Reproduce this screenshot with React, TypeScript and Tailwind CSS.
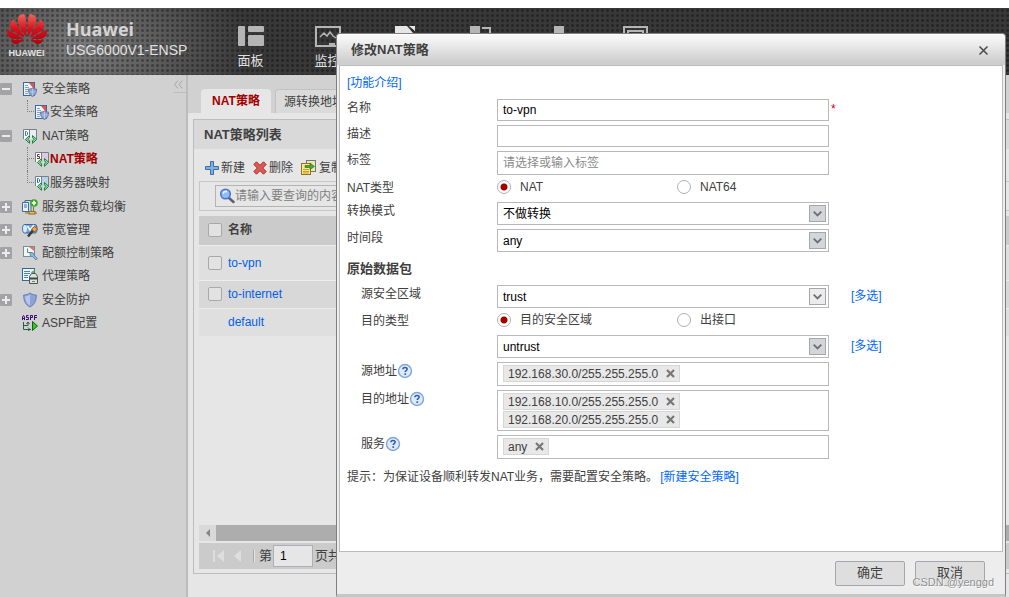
import type { ReactNode } from 'react'
import { SiHuawei } from 'react-icons/si'

/* ---------- icons ---------- */

const PolicyIcon = () => (
  <svg width="16" height="16" viewBox="0 0 16 16" className="shrink-0">
    <rect x="1.500" y="1.500" width="11" height="13" fill="#eef3f8" stroke="#3c6a94" />
    <path d="M7 2h5v6z" fill="#e0524d" />
    <path d="M3 4.500h3M3 6.500h4M3 8.500h4M3 10.500h3M3 12.500h3" stroke="#7fa5c8" />
    <path d="M6.500 8c2 0 3-.2 4-1 1 .8 2 1 4 1 0 4-1 6.200-4 7.500C7.500 14.200 6.500 12 6.500 8z" fill="#8fa3cf" stroke="#6478ae" />
    <path d="M10.500 8v6.500M8 11h5.500" stroke="#b9c7e6" />
  </svg>
)

const NatIcon = ({ letter, color, tint }: { letter: string; color: string; tint: string }) => (
  <svg width="16" height="16" viewBox="0 0 16 16" className="shrink-0">
    <path d="M1.500 11V1.500h13V11" fill={tint} stroke="#75808f" />
    <path d="M2 2h5v9H2z" fill="#fff" />
    <path d="M7.500 1.500V7" stroke="#75808f" />
    {letter === 'S' ? (
      <path d="M5.500 3.500h-2v2h2v2h-2.500" fill="none" stroke={color} />
    ) : (
      <path d="M3.500 3.500h1l1 1v2l-1 1h-1z" fill="none" stroke={color} />
    )}
    <path d="M7.500 7.500v2.200L6 11.300l1.500 1.700v2.300L3.300 11.400z" fill="#7fe0a0" stroke="#23803f" />
    <path d="M10.500 7.500v2.200l1.500 1.600-1.500 1.700v2.300l4.200-3.900z" fill="#7fe0a0" stroke="#23803f" />
  </svg>
)

const BalanceIcon = () => (
  <svg width="16" height="16" viewBox="0 0 16 16" className="shrink-0">
    <path d="M3 1.500h6v11H3z" fill="#c9dcf0" stroke="#3f6b9c" />
    <path d="M.5 3.500h6v9h-6z" fill="#eaf2fa" stroke="#3f6b9c" />
    <path d="M2 6h3M2 8h3" stroke="#3f6b9c" />
    <circle cx="12" cy="4" r="3.800" fill="#35a81c" />
    <path d="M12 1.800v4.400M9.800 4h4.400" stroke="#fff" strokeWidth="1.600" />
    <path d="M3 14h12M11.500 8v4" stroke="#84733a" />
    <rect x="7" y="12.500" width="6" height="2.500" fill="#f0c24b" stroke="#8a6d1e" />
  </svg>
)

const BandwidthIcon = () => (
  <svg width="16" height="16" viewBox="0 0 16 16" className="shrink-0">
    <path d="M2.500 2.500h11c2 0 2 8.500 0 8.500h-11c-2.500 0-2.500-8.500 0-8.500z" fill="#6fa3dc" stroke="#3c6798" />
    <ellipse cx="3" cy="6.700" rx="2" ry="3.700" fill="#d8e8f8" />
    <path d="M5.500 4l2.500 4 4-5" fill="none" stroke="#fff" strokeWidth="1.500" />
    <path d="M6 14.500l5-6" stroke="#3a3a3a" strokeWidth="2.500" />
    <path d="M9.500 7l3-2.500 3 2.500-3 3z" fill="#f2a748" stroke="#94560f" />
  </svg>
)

const QuotaIcon = () => (
  <svg width="16" height="16" viewBox="0 0 16 16" className="shrink-0">
    <rect x="1.500" y="1.500" width="11" height="10" fill="#f4f6f4" stroke="#7d8c94" />
    <path d="M7 2h5v4z" fill="#e8706c" />
    <path d="M5.500 3.500v4H10" fill="none" stroke="#4a9a5c" />
    <path d="M8 8l1.500-.5 2 .5.500 2 3.500 3.500-1.500 1.500-3.500-3.500-2-.5-.5-1.500z" fill="#8db7e2" stroke="#55809f" strokeWidth=".8" />
  </svg>
)

const ProxyIcon = () => (
  <svg width="16" height="16" viewBox="0 0 16 16" className="shrink-0">
    <rect x=".5" y=".5" width="12" height="12" fill="#eef4fa" stroke="#32689c" />
    <path d="M2 3.500h6M2 5.500h6M2 7.500h4M2 9.500h4" stroke="#4585bd" />
    <path d="M8.500 4.500L13 1.500l-1 4z" fill="#6faf50" />
    <path d="M9.500 5.500h4l2 3v7h-8v-7z" fill="#dfe2df" stroke="#4c5450" />
    <path d="M8 9.500h7v2H8z" fill="#3f4844" />
    <path d="M10 13.500h3" stroke="#49a040" />
  </svg>
)

const ShieldIcon = () => (
  <svg width="16" height="16" viewBox="0 0 16 16" className="shrink-0">
    <path d="M8 1c2 1.500 4 2 6.300 2 0 6-1.800 9.800-6.300 12C3.500 12.800 1.700 9 1.700 3 4 3 6 2.500 8 1z" fill="#8ba3d6" stroke="#6a7fae" />
    <path d="M8 2.500v11C4.800 11.500 3.200 8.800 3 4.200 5 4 6.500 3.500 8 2.500z" fill="#b4c6ea" />
  </svg>
)

const AspfIcon = () => (
  <svg width="16" height="16" viewBox="0 0 16 16" className="shrink-0">
    <path d="M.5 5V2l1-1.500L2.500 2v3M.5 3.500h2M6.500.5h-2v2h2v2h-2.500M8.500 5V.5h2v2h-2M15 .5h-2.500V5M12.500 2.500H15" fill="none" stroke="#3d0c72" />
    <path d="M1.500 7v7.500H9M1.500 10.500H6V7M4.500 9L6 7l1.500 2M6 12.500l2 2-2 1.500" fill="none" stroke="#2c5c4a" />
    <path d="M10.500 6.500l5 4.500-5 4.500z" fill="#37c42c" stroke="#14640f" />
  </svg>
)

const PlusIcon = () => (
  <svg width="14" height="14" viewBox="0 0 14 14">
    <path d="M5.500.5h3v5h5v3h-5v5h-3v-5h-5v-3h5z" fill="#7fb0de" stroke="#3a6fa5" />
  </svg>
)

const DeleteIcon = () => (
  <svg width="14" height="14" viewBox="0 0 14 14">
    <path d="M3.500.8L7 4.300 10.500.8l2.700 2.700L9.700 7l3.500 3.500-2.700 2.700L7 9.700l-3.500 3.500L.8 10.500 4.300 7 .8 3.500z" fill="#dc5a55" stroke="#a82f2c" />
  </svg>
)

const CopyIcon = () => (
  <svg width="16" height="16" viewBox="0 0 16 16">
    <rect x="5.500" y=".5" width="9" height="11" fill="#fbe88c" stroke="#6478a0" />
    <rect x=".5" y="3.500" width="9" height="11" fill="#fbe88c" stroke="#8c7420" />
    <path d="M2 9.500h6M2 11.500h6M2 13h6" stroke="#c79c28" />
    <path d="M4 5.500h5V3l4.500 3.500L9 9.500V7.500H4z" fill="#46a83a" stroke="#1f6a1a" strokeWidth=".6" />
  </svg>
)

const SearchIcon = () => (
  <svg width="16" height="16" viewBox="0 0 16 16" className="shrink-0">
    <path d="M10 10l4.500 4" stroke="#5c5f74" strokeWidth="2.500" strokeLinecap="round" />
    <circle cx="6.500" cy="6" r="4.800" fill="#8fbdf6" stroke="#4a74c8" strokeWidth="1.500" />
    <path d="M4 5.500c.5-1.500 2-2.300 4-1.800" fill="none" stroke="#fff" strokeWidth="1.500" />
  </svg>
)

const HelpIcon = () => (
  <svg width="16" height="16" viewBox="0 0 16 16" className="shrink-0">
    <circle cx="8" cy="8" r="6.500" fill="#dfeaf8" stroke="#7ea6da" strokeWidth="1.400" />
    <path d="M5.900 6.300c0-2.600 4.300-2.400 4.300-.3 0 1.500-2 1.600-2 3" fill="none" stroke="#2a5cab" strokeWidth="1.500" />
    <rect x="7.400" y="10.300" width="1.700" height="1.600" fill="#2a5cab" />
  </svg>
)

/* ---------- header ---------- */

const navItems: { label: string; text?: boolean; icon: ReactNode }[] = [
  {
    label: '面板',
    text: true,
    icon: (
      <>
        <rect x="0" y="0" width="7" height="20" rx="1" />
        <rect x="10" y="0" width="16" height="6" rx="1" />
        <rect x="10" y="9" width="16" height="11" rx="1" />
      </>
    ),
  },
  {
    label: '监控',
    text: true,
    icon: (
      <>
        <path d="M1 1h24v19H1z" fill="none" stroke="#b5b5b5" strokeWidth="2" />
        <path d="M5 11l4-4 3 3 3-4 3 4 3 2" fill="none" stroke="#b5b5b5" strokeWidth="1.500" />
        <rect x="14" y="17" width="6" height="3" />
      </>
    ),
  },
  { label: '策略', icon: <path d="M3 0h12l6 7v13H3zM17 0h6v5z" fill="#e6e6e6" /> },
  {
    label: '对象',
    icon: (
      <>
        <rect x="1" y="0" width="10" height="9" />
        <path d="M13 2h8v8" fill="none" stroke="#b5b5b5" strokeWidth="2" />
      </>
    ),
  },
  { label: '网络', icon: <rect x="8" y="0" width="10" height="20" /> },
  { label: '系统', icon: <path d="M1 1h23v19H1zM5 5h15v9H5z" fill="none" stroke="#b5b5b5" strokeWidth="2" /> },
]

const Header = () => (
  <header className="flex h-[67px] shrink-0 items-start overflow-hidden bg-[#383838] bg-[radial-gradient(circle,#00000050_1px,transparent_2px),radial-gradient(ellipse_170px_100px_at_80px_40px,#7c7c7c,transparent)] bg-[length:5px_5px,100%_100%] text-[#e0e0e0]">
    <svg width="0" height="0" className="absolute">
      <linearGradient id="petal" x1="0" y1="0" x2="0" y2="1">
        <stop offset="0" stopColor="#f0655c" />
        <stop offset=".5" stopColor="#d5121b" />
        <stop offset="1" stopColor="#b3000e" />
      </linearGradient>
    </svg>
    <div className="flex w-[212px] shrink-0 pl-1.5">
      <div className="flex w-[41px] flex-col items-center pt-px">
        <SiHuawei size={40} fill="url(#petal)" />
        <span className="text-[9px] leading-[8px] font-bold">HUAWEI</span>
      </div>
      <div className="pt-3 pl-[19px]">
        <div className="font-['Open_Sans',sans-serif] text-lg leading-[18px] font-bold text-[#d4d4d4]">Huawei</div>
        <div className="text-sm leading-6 whitespace-nowrap">USG6000V1-ENSP</div>
      </div>
    </div>
    <nav className="flex">
      {navItems.map((item) => (
        <a key={item.label} href="#" aria-label={item.label} className="flex w-[77px] flex-col items-center pt-[18px] text-[13px] leading-4">
          <svg width="26" height="21" viewBox="0 0 26 21" fill="#b5b5b5">
            {item.icon}
          </svg>
          {item.text && <span className="pt-1.5">{item.label}</span>}
        </a>
      ))}
    </nav>
  </header>
)

/* ---------- sidebar ---------- */

type Node = { label: string; icon: ReactNode; open?: boolean; leaf?: boolean; children?: Node[]; active?: boolean }

const tree: Node[] = [
  { label: '安全策略', icon: <PolicyIcon />, open: true, children: [{ label: '安全策略', icon: <PolicyIcon /> }] },
  {
    label: 'NAT策略',
    icon: <NatIcon letter="D" color="#2f7fc4" tint="#e8eef4" />,
    open: true,
    children: [
      { label: 'NAT策略', icon: <NatIcon letter="S" color="#7a3030" tint="#dccbe0" />, active: true },
      { label: '服务器映射', icon: <NatIcon letter="D" color="#1f6fc0" tint="#b9d4e8" /> },
    ],
  },
  { label: '服务器负载均衡', icon: <BalanceIcon /> },
  { label: '带宽管理', icon: <BandwidthIcon /> },
  { label: '配额控制策略', icon: <QuotaIcon /> },
  { label: '代理策略', icon: <ProxyIcon />, leaf: true },
  { label: '安全防护', icon: <ShieldIcon /> },
  { label: 'ASPF配置', icon: <AspfIcon />, leaf: true },
]

const Sidebar = () => (
  <aside className="flex w-[188px] shrink-0 border-r-2 border-[#bcbcbc] bg-[#d1d1d1] pt-0.5">
    <ul className="flex-1">
      {tree.map((node) => (
        <li key={node.label}>
          <div className={node.leaf ? 'flex h-6 items-center' : 'flex h-[23px] items-center'}>
            {node.leaf ? (
              <span className="w-3" />
            ) : (
              <button className="w-3" aria-label={node.label}>
                <svg width="12" height="12" viewBox="0 0 12 12" className="block">
                  <rect width="12" height="12" rx="1" fill="#a3a3a6" />
                  <path d={node.open ? 'M2 6h8' : 'M2 6h8M6 2v8'} stroke="#ececec" strokeWidth="2" />
                </svg>
              </button>
            )}
            <a href="#" className="flex items-center gap-1 pl-2.5">
              {node.icon}
              {node.label}
            </a>
          </div>
          {node.children && (
            <ul className="pl-[27px]">
              {node.children.map((child, i) => (
                <li key={child.label} className="flex h-6 items-center">
                  <span className="flex h-full w-[7px] flex-col">
                    <span className="h-1/2 border-b border-l border-dotted border-[#808080]" />
                    {i < node.children!.length - 1 && <span className="h-1/2 border-l border-dotted border-[#808080]" />}
                  </span>
                  <a href="#" className={child.active ? 'flex items-center font-bold text-[#a30000]' : 'flex items-center'}>
                    {child.icon}
                    {child.label}
                  </a>
                </li>
              ))}
            </ul>
          )}
        </li>
      ))}
    </ul>
    <button className="flex h-4 w-3 items-center border-b border-[#bdbdbd]" aria-label="收起">
      <svg width="9" height="9" viewBox="0 0 9 9" fill="none" stroke="#a5a5a5">
        <path d="M4 .5l-3.500 4 3.500 4M8.500.5L5 4.500l3.500 4" />
      </svg>
    </button>
  </aside>
)

/* ---------- policy list behind the dialog ---------- */

const rows = [
  { name: 'to-vpn', check: true, cls: 'h-[35px] bg-[#dfdfdf]' },
  { name: 'to-internet', check: true, cls: 'h-7 bg-[#d8d8d8]' },
  { name: 'default', check: false, cls: 'h-7 bg-[#dfdfdf]' },
]

const checkCls = 'block size-3.5 appearance-none rounded-xs border border-[#a9a9a9] bg-[#e2e2e2]'

const PolicyList = () => (
  <main className="flex min-w-0 flex-1 flex-col bg-[#e6e6e6]">
    <div className="flex h-[38px] shrink-0 items-end gap-1 bg-[#d1d1d1] pl-[13px]">
      <button className="h-6 w-[70px] rounded-t bg-[#e6e6e6] font-bold text-[#a30000]">NAT策略</button>
      <button className="h-6 rounded-t border border-b-0 border-[#c2c2c2] bg-[#dadada] px-2 whitespace-nowrap">源转换地址池</button>
    </div>
    <section className="mt-1.5 mb-[23px] ml-[5px] flex flex-1 flex-col border border-r-0 border-[#bdbdbd]">
      <h2 className="flex h-[29px] items-center bg-[#d9d9d9] pl-2.5 text-[13px] font-bold">NAT策略列表</h2>
      <div className="flex h-8 items-center gap-2 pt-1.5 pl-[11px] whitespace-nowrap">
        <button className="flex items-center gap-0.5"><PlusIcon />新建</button>
        <button className="flex items-center gap-0.5"><DeleteIcon />删除</button>
        <button className="flex items-center gap-0.5"><CopyIcon />复制</button>
      </div>
      <div className="ml-[5px] flex h-[30px] items-center border border-r-0 border-[#c6c6c6] pl-[15px]">
        <label className="flex h-[22px] w-[220px] items-center border border-[#b3b3b3] pl-[3px]">
          <SearchIcon />
          <input aria-label="查询" placeholder="请输入要查询的内容" className="w-full bg-transparent outline-none placeholder:text-[#808080]" />
        </label>
      </div>
      <table className="mt-[5px] ml-[5px] border-collapse text-left">
        <thead>
          <tr className="h-[29px] bg-[#cbcbcb]">
            <th className="w-[29px] pl-[9px]"><input type="checkbox" aria-label="全选" className={checkCls} /></th>
            <th>名称</th>
          </tr>
        </thead>
        <tbody>
          {rows.map((r) => (
            <tr key={r.name} className={`border-t border-[#ececec] ${r.cls}`}>
              <td className="pl-[9px]">{r.check && <input type="checkbox" aria-label={r.name} className={checkCls} />}</td>
              <td><a href="#" className="text-[#005fe5]">{r.name}</a></td>
            </tr>
          ))}
        </tbody>
      </table>
      <div className="mt-auto ml-[5px] flex h-4 bg-[#d9d9d9]">
        <span className="flex w-[17px] items-center justify-center">
          <svg width="4" height="8" viewBox="0 0 4 8"><path d="M4 0v8L0 4z" fill="#858585" /></svg>
        </span>
        <span className="flex-1 bg-[#adadad]" />
      </div>
      <div className="mt-0.5 mb-1 ml-[5px] flex h-[26px] items-center bg-[#cbcbcb] pl-3.5 text-[13px] whitespace-nowrap">
        <button aria-label="首页"><svg width="12" height="12" viewBox="0 0 12 12" fill="#dedede"><path d="M0 0h2v12H0zM11 0v12L4 6z" /></svg></button>
        <button aria-label="上一页" className="ml-2"><svg width="8" height="12" viewBox="0 0 8 12" fill="#dedede"><path d="M8 0v12L1 6z" /></svg></button>
        <span className="mr-1 ml-3 h-3 w-0.5 border-l border-[#a9a9a9] bg-[#e6e6e6]" />
        <label className="flex items-center gap-px">
          第
          <input defaultValue="1" className="h-[22px] w-10 border border-[#adb0b5] bg-[#e6e6e6] pl-1.5 text-xs text-black" />
        </label>
        <span className="pl-0.5">页共1页</span>
      </div>
    </section>
  </main>
)

/* ---------- dialog ---------- */

const inputCls = 'w-[332px] border border-[#b8b8bd] bg-white pl-[5px] text-black outline-none'

const Row = ({ label, id, help, indent, children }: { label?: string; id?: string; help?: boolean; indent?: boolean; children: ReactNode }) => (
  <div className="flex items-start">
    <div className={indent ? 'flex w-[150px] shrink-0 items-center pl-3.5' : 'flex w-[150px] shrink-0 items-center'}>
      {label && <label htmlFor={id} className="leading-[18px]">{label}</label>}
      {help && <HelpIcon />}
    </div>
    {children}
  </div>
)

const Select = ({ id, value, light }: { id: string; value: string; light?: boolean }) => (
  <div className="relative">
    <select id={id} aria-label={value} className={`${inputCls} block h-[23px] appearance-none`}>
      <option>{value}</option>
    </select>
    <span className={`pointer-events-none absolute top-[3px] right-[3px] flex size-[17px] items-center justify-center border border-[#a4a7ac] ${light ? 'bg-[#ececec]' : 'bg-[#d3d5d8]'}`}>
      <svg width="9" height="6" viewBox="0 0 9 6" fill="none" stroke="#6c6e72" strokeWidth="1.800">
        <path d="M.7.7l3.800 3.800L8.300.7" />
      </svg>
    </span>
  </div>
)

const Radios = ({ name, options }: { name: string; options: string[] }) => (
  <div className="flex h-[19px] items-start">
    {options.map((o, i) => (
      <label key={o} className="flex w-[180px] items-center gap-[9px] leading-4">
        <input
          type="radio"
          name={name}
          defaultChecked={i === 0}
          className="size-3.5 appearance-none rounded-full border border-[#b0b0b0] bg-white checked:bg-[radial-gradient(circle,#a30000_3px,transparent_4px)]"
        />
        {o}
      </label>
    ))}
  </div>
)

const Tags = ({ items }: { items: string[] }) => (
  <div className="flex min-h-6 w-[332px] flex-col items-start gap-px border border-[#b8b8bd] py-0.5 pl-[5px]">
    {items.map((t) => (
      <span key={t} className="flex h-[17px] items-center gap-2 border border-[#d6d6d6] bg-[#e8e8e8] px-1">
        {t}
        <button aria-label={`删除 ${t}`}>
          <svg width="9" height="9" viewBox="0 0 9 9" className="block" stroke="#777" strokeWidth="2.200">
            <path d="M1 1l7 7M8 1L1 8" />
          </svg>
        </button>
      </span>
    ))}
  </div>
)

const Multi = () => <a href="#" className="pl-[22px] leading-[22px] text-[#0066ff]">[多选]</a>

const Dialog = () => (
  <div role="dialog" aria-label="修改NAT策略" className="absolute top-[33px] right-[3px] bottom-0 left-[336px] flex flex-col rounded-t border border-b-[3px] border-[#7f7f7f] border-b-[#c6c6c6] bg-[#ededed]">
    <div className="flex h-[31px] shrink-0 items-center justify-between rounded-t border-t border-white bg-linear-to-b from-[#f6f6f6] from-10% to-[#cecece] to-90% pr-[17px] pl-3.5">
      <h1 className="text-[13px] font-bold">修改NAT策略</h1>
      <button aria-label="关闭">
        <svg width="9" height="9" viewBox="0 0 9 9" className="block" stroke="#4a4a4a" strokeWidth="1.500">
          <path d="M.5.5l8 8M8.500.5l-8 8" />
        </svg>
      </button>
    </div>
    <form className="mx-0.5 flex flex-1 flex-col gap-1 border border-[#bcbcbc] bg-white px-[7px] pt-2">
      <a href="#" className="mb-[3px] self-start leading-[18px] text-[#0066ff]">[功能介绍]</a>
      <Row label="名称" id="name">
        <input id="name" defaultValue="to-vpn" className={`${inputCls} h-[22px]`} />
        <span className="pl-0.5 leading-5 text-[#d00000]">*</span>
      </Row>
      <Row label="描述" id="desc"><input id="desc" className={`${inputCls} h-[22px]`} /></Row>
      <Row label="标签" id="tag"><input id="tag" placeholder="请选择或输入标签" className={`${inputCls} h-6 placeholder:text-[#8a8a8a]`} /></Row>
      <Row label="NAT类型"><Radios name="nat" options={['NAT', 'NAT64']} /></Row>
      <Row label="转换模式" id="mode"><Select id="mode" value="不做转换" /></Row>
      <Row label="时间段" id="time"><Select id="time" value="any" /></Row>
      <h3 className="flex h-[25px] items-center text-[13px] font-bold">原始数据包</h3>
      <Row label="源安全区域" id="src" indent><Select id="src" value="trust" light /><Multi /></Row>
      <Row label="目的类型" indent><Radios name="dst" options={['目的安全区域', '出接口']} /></Row>
      <Row indent><Select id="dst" value="untrust" /><Multi /></Row>
      <Row label="源地址" help indent><Tags items={['192.168.30.0/255.255.255.0']} /></Row>
      <Row label="目的地址" help indent><Tags items={['192.168.10.0/255.255.255.0', '192.168.20.0/255.255.255.0']} /></Row>
      <Row label="服务" help indent><Tags items={['any']} /></Row>
      <p className="pt-[5px] leading-[18px]">
        提示：为保证设备顺利转发NAT业务，需要配置安全策略。<a href="#" className="pl-0.5 text-[#0066ff]">[新建安全策略]</a>
      </p>
    </form>
    <div className="relative flex h-[42px] shrink-0 items-center justify-end gap-2.5 pr-5">
      <button className="h-[25px] w-[70px] rounded-xs border border-[#a4a6ac] bg-[#dedede] text-[13px]">确定</button>
      <button className="h-[25px] w-[70px] rounded-xs border border-[#a4a6ac] bg-[#dedede] text-[13px]">取消</button>
      <span className="absolute right-[11px] bottom-1 text-[11px] leading-4 text-[#8c8c8c] [text-shadow:0_0_1px_#fff,1px_1px_1px_#fff]">CSDN @yenggd</span>
    </div>
  </div>
)

export default function App() {
  return (
    <div className="relative flex h-screen flex-col overflow-hidden bg-white pt-2 font-['Liberation_Sans','Noto_Sans_CJK_SC',sans-serif] text-xs text-[#404040]">
      <Header />
      <div className="flex min-h-0 flex-1">
        <Sidebar />
        <PolicyList />
      </div>
      <Dialog />
    </div>
  )
}
